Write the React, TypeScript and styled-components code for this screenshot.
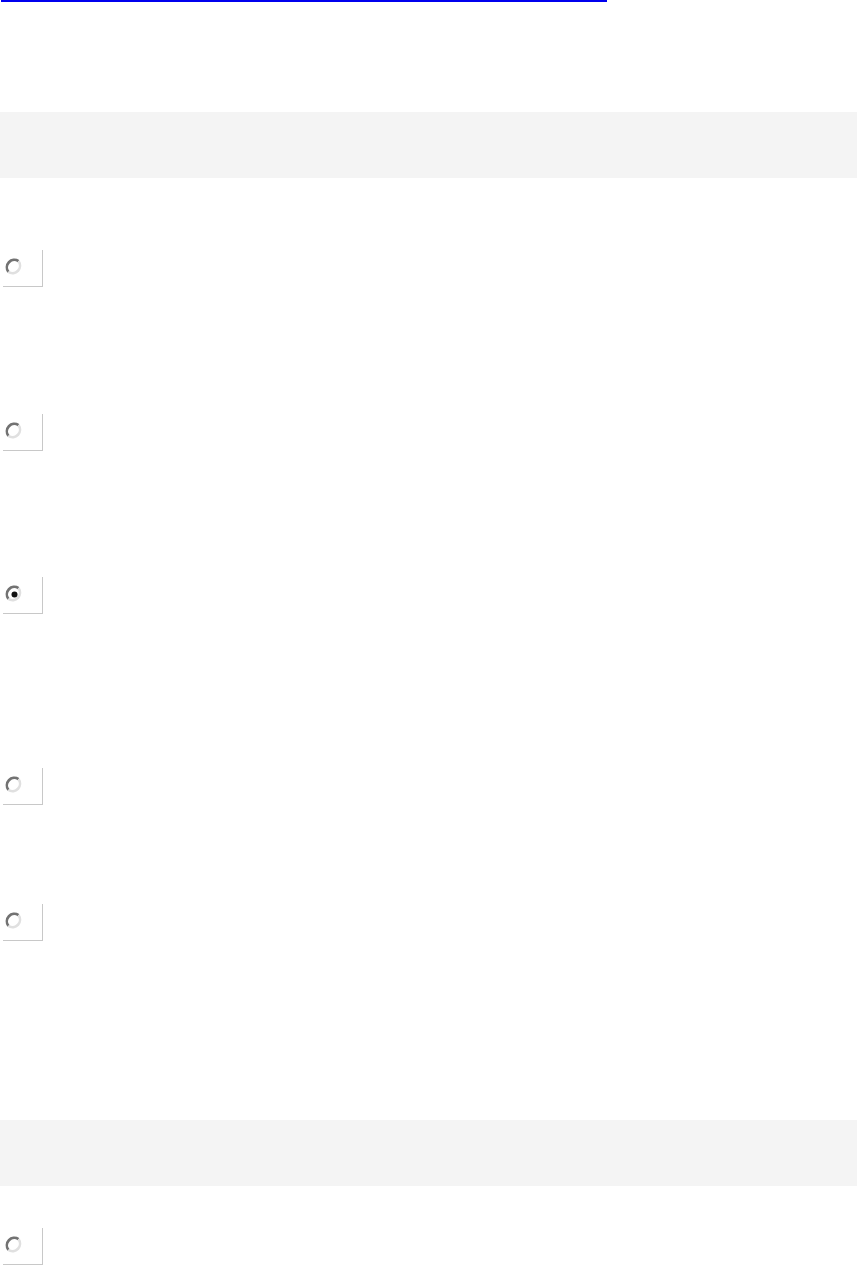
import React from "react";
import styled, { createGlobalStyle } from "styled-components";

const GlobalStyle = createGlobalStyle`
  html, body {
    margin: 0;
    padding: 0;
    background: #ffffff;
    font-family: "Liberation Sans", Arial, sans-serif;
  }
`;

const Page = styled.div`
  width: 857px;
  height: 1265px;
  overflow: hidden;
  display: flex;
  flex-direction: column;
`;

const TopLink = styled.a`
  display: block;
  margin-left: 1px;
  width: 606px;
  height: 2px;
  background: #0000ee;
`;

const SectionBar = styled.div<{ $top: number }>`
  margin-top: ${(p) => p.$top}px;
  height: 66px;
  background: #f4f4f4;
  flex-shrink: 0;
`;

const Row = styled.div<{ $top: number }>`
  margin-top: ${(p) => p.$top}px;
  display: flex;
  flex-shrink: 0;
`;

const RadioCell = styled.label`
  margin-left: 3px;
  width: 37px;
  height: 36px;
  padding-left: 2px;
  border-right: 1px solid #c8c8c8;
  border-bottom: 1px solid #c8c8c8;
  display: flex;
  align-items: center;
  cursor: pointer;
`;

const RadioIcon = styled.svg`
  width: 19px;
  height: 19px;
  display: block;
  margin-top: -2px;
`;

function Radio({ checked }: { checked?: boolean }) {
  return (
    <RadioIcon viewBox="0 0 19 19">
      <circle cx="9.5" cy="9.5" r="7.5" fill="#ffffff" />
      <path d="M3.4 13.9 A7.5 7.5 0 0 1 13.5 3.1" fill="none" stroke="#727272" strokeWidth="2.6" />
      <path d="M13.5 3.1 A7.5 7.5 0 0 1 3.4 13.9" fill="none" stroke="#e0e0e0" strokeWidth="2.6" />
      {checked && <circle cx="9.5" cy="9.5" r="3" fill="#111111" />}
    </RadioIcon>
  );
}

const rows = [
  { top: 72, checked: false },
  { top: 127, checked: false },
  { top: 126, checked: true },
  { top: 154, checked: false },
  { top: 99, checked: false },
];

export default function App() {
  return (
    <Page>
      <GlobalStyle />
      <TopLink href="#" aria-label="link" />
      <SectionBar $top={110} />
      {rows.map((r, i) => (
        <Row key={i} $top={r.top}>
          <RadioCell>
            <Radio checked={r.checked} />
          </RadioCell>
        </Row>
      ))}
      <SectionBar $top={179} />
      <Row $top={42}>
        <RadioCell>
          <Radio />
        </RadioCell>
      </Row>
    </Page>
  );
}
